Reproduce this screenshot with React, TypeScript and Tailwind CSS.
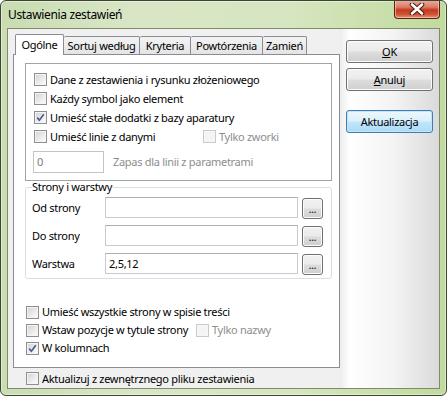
import React from "react";

const F = "font-['Noto_Sans',sans-serif]";

function Box({ checked, disabled }: { checked?: boolean; disabled?: boolean }) {
  return (
    <span
      className={`relative inline-block w-[13px] h-[13px] shrink-0 border ${
        disabled ? "border-[#c9c9c9] bg-[#f7f7f7]" : "border-[#8e8f8f] bg-[#f4f4f4]"
      }`}
    >
      <span
        className={`absolute inset-[1px] ${
          disabled ? "bg-[#f4f4f4]" : "bg-gradient-to-br from-[#d6d6d6] to-[#fbfbfb]"
        }`}
      />
      {checked && (
        <svg className="absolute left-[1px] top-[1px]" width="9" height="9" viewBox="0 0 9 9">
          <path d="M1.2 4.6 L3.4 7.2 L7.8 1.2" fill="none" stroke="#4b5f92" strokeWidth="1.7" />
        </svg>
      )}
    </span>
  );
}

function Check({
  label,
  checked,
  disabled,
  w,
}: {
  label: string;
  checked?: boolean;
  disabled?: boolean;
  w?: string;
}) {
  return (
    <div className={`flex items-center gap-[3px] ${w ?? ""}`}>
      <Box checked={checked} disabled={disabled} />
      <span className={`whitespace-nowrap ${disabled ? "text-[#8d8d8d]" : "text-black"}`}>{label}</span>
    </div>
  );
}

function Btn({ children, focus }: { children: React.ReactNode; focus?: boolean }) {
  return (
    <div
      className={`w-[87px] h-[23px] rounded-[3px] border flex items-center justify-center text-black ${
        focus
          ? "border-[#3c7fb1] bg-[linear-gradient(#ecf7fd_0%,#dcf1fc_48%,#c1e6fb_52%,#a9dbf6_100%)] shadow-[inset_0_0_0_1px_#c4e5f6]"
          : "border-[#707070] bg-[linear-gradient(#f2f2f2_0%,#ebebeb_48%,#dddddd_52%,#cfcfcf_100%)] shadow-[inset_0_0_0_1px_#fcfcfc]"
      }`}
    >
      {children}
    </div>
  );
}

function Dots() {
  return (
    <div className="w-[21px] h-[21px] mt-[1px] rounded-[3px] border border-[#707070] bg-[linear-gradient(#f2f2f2_0%,#ebebeb_48%,#dddddd_52%,#cfcfcf_100%)] shadow-[inset_0_0_0_1px_#fcfcfc] flex items-end justify-center pb-[4px]">
      <span className="text-[9px] leading-[8px] font-bold text-[#1c2b50] tracking-[0px]">...</span>
    </div>
  );
}

function Field({ value }: { value?: string }) {
  return (
    <div className="w-[193px] h-[21px] border border-[#c8cbd1] border-t-[#abadb3] bg-white flex items-center pl-[3px] text-black">
      {value}
    </div>
  );
}

export default function App() {
  const tabBase =
    "h-[18px] border-t border-r border-[#898c95] rounded-t-[2px] bg-[linear-gradient(#f3f3f3,#e4e4e4)] flex items-center justify-center";
  return (
    <div className={`${F} text-[11px] leading-[14px] tracking-[-0.3px] w-[447px] h-[396px] border border-[#3a4631] rounded-[6px] bg-[linear-gradient(to_right,#c9dcb2_0%,#d9e6c6_30%,#d6e6c0_65%,#c1da9c_100%)] shadow-[inset_0_0_0_1px_rgba(255,255,255,0.45)] flex flex-col overflow-hidden`}>
      {/* title bar */}
      <div className="h-[27px] flex items-start justify-between pl-[7px] pr-[6px]">
        <div className="mt-[6px] text-[12px] leading-[16px] tracking-[-0.35px] text-black">Ustawienia zestawień</div>
        <div className="w-[46px] h-[19px] -mt-[1px] rounded-b-[4px] border border-t-0 border-[#5b1f14] bg-[linear-gradient(#eab0a2_0%,#dc7a66_40%,#c23a1e_55%,#cf5435_80%,#e4957c_100%)] shadow-[inset_0_0_0_1px_rgba(255,220,210,0.55)] flex items-center justify-center">
          <svg width="16" height="12" viewBox="0 0 16 12">
            <path d="M3 1.5 L13 10.5 M13 1.5 L3 10.5" stroke="#4a1a12" strokeWidth="4.6" strokeLinecap="round" />
            <path d="M3 1.5 L13 10.5 M13 1.5 L3 10.5" stroke="#ffffff" strokeWidth="2.6" strokeLinecap="round" />
          </svg>
        </div>
      </div>

      {/* client area */}
      <div className="mx-[6px] h-[361px] border border-[#7d8d6c] bg-[#f0f0f0] flex">
        {/* left column */}
        <div className="w-[332px] flex flex-col">
          {/* tab strip */}
          <div className="mt-[5px] ml-[7px] h-[20px] flex items-end relative z-10">
            <div className="w-[49px] h-[21px] -mb-[1px] border-l border-t border-r border-[#898c95] rounded-t-[2px] bg-white flex items-start justify-center pt-[3px]">
              Ogólne
            </div>
            <div className={`${tabBase} w-[76px]`}>Sortuj według</div>
            <div className={`${tabBase} w-[51px]`}>Kryteria</div>
            <div className={`${tabBase} w-[72px]`}>Powtórzenia</div>
            <div className={`${tabBase} w-[44px]`}>Zamień</div>
          </div>
          {/* tab panel */}
          <div className="ml-[5px] w-[327px] h-[314px] border border-[#898c95] bg-white flex flex-col">
            {/* group 1 */}
            <div className="ml-[11px] mt-[8px] w-[307px] h-[118px] border border-[#a3a3a3] flex flex-col pt-[6px] pl-[8px]">
              <div className="h-[19px] flex items-center">
                <Check label="Dane z zestawienia i rysunku złożeniowego" />
              </div>
              <div className="h-[19px] flex items-center">
                <Check label="Każdy symbol jako element" />
              </div>
              <div className="h-[19px] flex items-center">
                <Check label="Umieść stałe dodatki z bazy aparatury" checked />
              </div>
              <div className="h-[19px] flex items-center">
                <Check label="Umieść linie z danymi" w="w-[169px]" />
                <Check label="Tylko zworki" disabled />
              </div>
              <div className="mt-[5px] flex items-center">
                <div className="-ml-[1px] w-[71px] h-[22px] border border-[#c3c3c3] bg-white flex items-center pl-[3px] text-[#7a7a7a]">
                  0
                </div>
                <span className="ml-[9px] text-[#8d8d8d]">Zapas dla linii z parametrami</span>
              </div>
            </div>
            {/* group 2 */}
            <fieldset className="ml-[11px] w-[307px] h-[98px] border border-[#d5dfe5] rounded-[3px] pl-[6px] pr-0 pb-0 pt-0">
              <legend className="leading-[12px] px-0 text-black">Strony i warstwy</legend>
              <div className="mt-[4px] flex flex-col gap-[6px]">
                <div className="flex items-start">
                  <div className="w-[73px] h-[21px] flex items-center">Od strony</div>
                  <Field />
                  <div className="ml-[4px]"><Dots /></div>
                </div>
                <div className="flex items-start">
                  <div className="w-[73px] h-[21px] flex items-center">Do strony</div>
                  <Field />
                  <div className="ml-[4px]"><Dots /></div>
                </div>
                <div className="flex items-start">
                  <div className="w-[73px] h-[21px] flex items-center">Warstwa</div>
                  <Field value="2,5,12" />
                  <div className="ml-[4px]"><Dots /></div>
                </div>
              </div>
            </fieldset>
            {/* bottom checks */}
            <div className="mt-[24px] ml-[12px] flex flex-col">
              <div className="h-[18px] flex items-center">
                <Check label="Umieść wszystkie strony w spisie treści" />
              </div>
              <div className="h-[18px] flex items-center">
                <Check label="Wstaw pozycje w tytule strony" w="w-[170px]" />
                <Check label="Tylko nazwy" disabled />
              </div>
              <div className="h-[18px] flex items-center">
                <Check label="W kolumnach" checked />
              </div>
            </div>
          </div>
          <div className="mt-[2px] ml-[18px] h-[17px] flex items-center">
            <Check label="Aktualizuj z zewnętrznego pliku zestawienia" />
          </div>
        </div>
        {/* right column */}
        <div className="flex-1 bg-[linear-gradient(to_right,#ececec_0%,#ffffff_10%,#f3f3f3_55%,#dadada_100%)] flex flex-col pl-[6px]">
          <div className="mt-[11px]">
            <Btn>
              <span><span className="underline">O</span>K</span>
            </Btn>
          </div>
          <div className="mt-[5px]">
            <Btn>
              <span><span className="underline">A</span>nuluj</span>
            </Btn>
          </div>
          <div className="mt-[19px]">
            <Btn focus>Aktualizacja</Btn>
          </div>
        </div>
      </div>
    </div>
  );
}
